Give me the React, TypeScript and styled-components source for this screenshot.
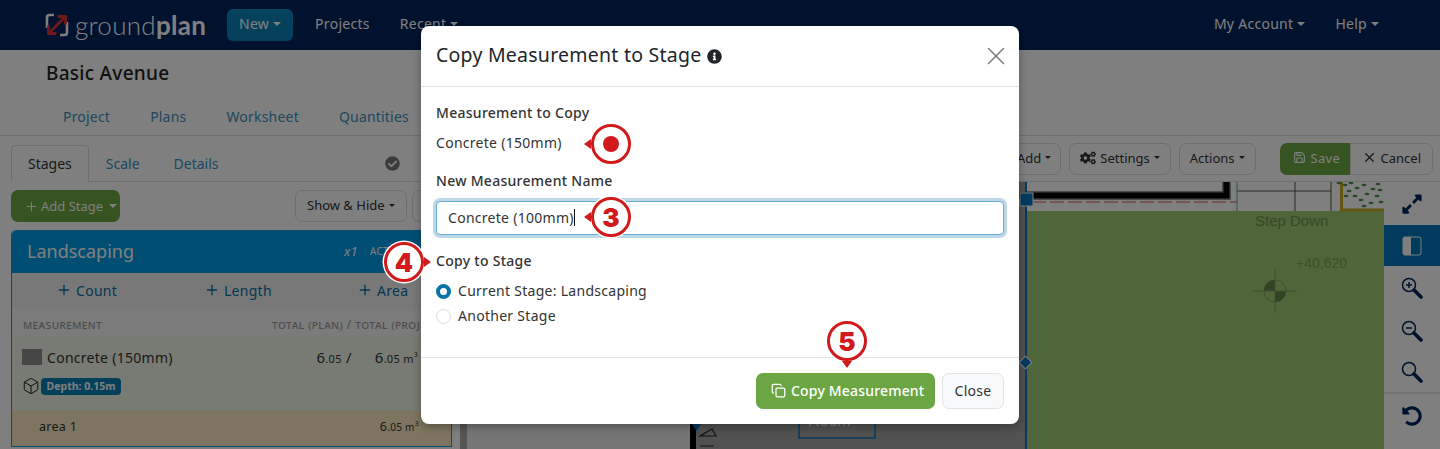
import React from 'react';
import styled, { createGlobalStyle } from 'styled-components';
import { Box, Copy, Plus, Save, X } from 'lucide-react';
import { FaCheckCircle, FaCogs, FaExpandAlt, FaInfoCircle, FaUndoAlt } from 'react-icons/fa';

const Global = createGlobalStyle`
  html, body { margin: 0; padding: 0; background: #fff; }
  body {
    font-family: "Noto Sans", "Open Sans", Arial, sans-serif;
    font-size: 14px;
    letter-spacing: 0.28px;
    color: #333;
    overflow: hidden;
  }
  * { box-sizing: border-box; }
`;

const Page = styled.div`
  position: relative;
  width: 1440px;
  height: 449px;
  overflow: hidden;
  background: #fff;
`;

const Navbar = styled.nav`
  height: 50px;
  background: #02245c;
  display: flex;
  align-items: center;
  padding: 0 44px 0 45px;
  color: #fff;
`;

const Logo = styled.div`
  display: flex;
  align-items: center;
  gap: 6px;
  width: 182px;
`;

const LogoText = styled.span`
  font-family: "Lato", sans-serif;
  font-size: 26px;
  font-weight: 300;
  letter-spacing: 0.3px;
  color: #fff;
  b { font-weight: 700; }
`;

const NavButton = styled.a<{ $active?: boolean }>`
  display: inline-flex;
  align-items: center;
  height: 32px;
  padding: 0 ${(p) => (p.$active ? '12px' : '13px')} 3px;
  border-radius: 6px;
  font-size: 14px;
  color: #fff;
  margin-right: ${(p) => (p.$active ? '9px' : '4px')};
  background: ${(p) => (p.$active ? 'linear-gradient(#0a86bd, #087fb5)' : 'transparent')};
`;

const Caret = styled.i`
  display: inline-block;
  width: 0;
  height: 0;
  margin-left: 4px;
  border-top: 4px solid currentColor;
  border-left: 4px solid transparent;
  border-right: 4px solid transparent;
`;

const NavSpacer = styled.div`
  flex: 1;
`;

const ProjectHeader = styled.header`
  height: 86px;
  padding: 10px 0 0 46px;
  border-bottom: 1px solid #ddd;
`;

const ProjectTitle = styled.h1`
  margin: 0;
  font-size: 19px;
  line-height: 26px;
  font-weight: 500;
  color: #222;
`;

const ProjectTabs = styled.div`
  display: flex;
  gap: 40px;
  margin: 21px 0 0 17px;
`;

const LinkTab = styled.a`
  font-size: 14px;
  letter-spacing: 0.2px;
  color: #3c8fc0;
`;

const Workspace = styled.div`
  display: flex;
  height: 313px;
`;

const LeftPanel = styled.aside`
  width: 452px;
  flex: none;
  padding: 9px 0 0 11px;
`;

const PanelTabs = styled.div`
  display: flex;
  align-items: flex-end;
  height: 37px;
  border-bottom: 1px solid #ddd;
  padding-right: 30px;
`;

const PanelTab = styled.a<{ $active?: boolean }>`
  height: 37px;
  display: flex;
  align-items: center;
  padding: 0 16px;
  font-size: 14px;
  letter-spacing: 0;
  color: ${(p) => (p.$active ? '#333' : '#3c8fc0')};
  border: 1px solid ${(p) => (p.$active ? '#ddd' : 'transparent')};
  border-bottom-color: ${(p) => (p.$active ? '#fff' : 'transparent')};
  border-radius: 4px 4px 0 0;
  margin-bottom: -1px;
`;

const PanelStatus = styled.div`
  margin-left: auto;
  align-self: center;
  padding-right: 22px;
  display: flex;
  color: #777;
`;

const StageBar = styled.div`
  display: flex;
  align-items: center;
  height: 32px;
  margin-top: 8px;
`;

const AddStage = styled.a`
  display: inline-flex;
  align-items: center;
  gap: 2px;
  height: 32px;
  width: 109px;
  padding-left: 13px;
  border-radius: 7px;
  background: #6ca644;
  color: #fff;
  font-size: 13px;
  letter-spacing: 0;
  white-space: nowrap;
`;

const OutlineButton = styled.a<{ $flat?: boolean; $pad?: number }>`
  display: inline-flex;
  align-items: center;
  flex: none;
  height: 32px;
  padding: 0 ${(p) => p.$pad ?? 9}px 2px;
  font-size: 13px;
  letter-spacing: 0;
  color: #333;
  background: #fff;
  border: 1px solid #ddd;
  border-radius: ${(p) => (p.$flat ? '0 7px 7px 0' : '7px')};
  white-space: nowrap;
  svg { margin-right: 4px; }
  i {
    margin-left: 4px;
    border-top-width: 3.5px;
    border-left-width: 3.5px;
    border-right-width: 3.5px;
  }
`;

const StageBarRight = styled.div`
  margin-left: auto;
  display: flex;
  gap: 5px;
  overflow: hidden;
  width: 157px;
`;

const StageCard = styled.section`
  margin-top: 8px;
  border: 1px solid #0a9ce2;
  border-top: none;
  border-radius: 5px 5px 0 0;
`;

const StageHead = styled.div`
  height: 43px;
  background: #009ce6;
  border-radius: 5px 5px 0 0;
  color: #fff;
  display: flex;
  align-items: center;
  padding: 0 0 2px 15px;
`;

const StageName = styled.div`
  font-size: 18px;
  letter-spacing: 0;
  flex: 1;
`;

const StageMeta = styled.em`
  font-size: 13px;
  margin-right: 12px;
`;

const StageActive = styled.span`
  font-size: 10px;
  width: 81px;
  white-space: nowrap;
  overflow: hidden;
`;

const AddRow = styled.div`
  height: 36px;
  background: #f1f1f1;
  display: grid;
  grid-template-columns: 148px 153px 1fr;
  align-items: center;
  padding: 0 0 2px 44px;
`;

const AddLink = styled.a`
  display: inline-flex;
  align-items: center;
  gap: 4px;
  color: #0a6ea6;
  font-size: 14px;
`;

const TableHead = styled.div`
  height: 28px;
  display: flex;
  align-items: center;
  background: #f7f7f7;
  padding: 2px 0 0 11px;
  color: #999;
  font-size: 12.5px;
  letter-spacing: 0.4px;
  font-variant: small-caps;
  text-transform: lowercase;
  white-space: nowrap;
  overflow: hidden;
`;

const TableHeadName = styled.span`
  width: 249px;
  flex: none;
`;

const MeasureRow = styled.div`
  height: 74px;
  background: #eef7e6;
  padding: 10px 0 0 10px;
`;

const MeasureTop = styled.div`
  display: flex;
  align-items: center;
  gap: 5px;
  color: #333;
  font-size: 14px;
`;

const Swatch = styled.i`
  width: 20px;
  height: 16px;
  background: #8c8c8c;
`;

const MeasureTotals = styled.div`
  margin-left: auto;
  display: flex;
  gap: 23px;
  font-size: 15px;
  white-space: nowrap;
  padding-right: 33px;
  small { font-size: 11px; }
  sup { font-size: 7px; }
`;

const MeasureTags = styled.div`
  display: flex;
  align-items: center;
  margin-top: 10px;
  color: #111;
`;

const DepthBadge = styled.span`
  margin-left: 1px;
  height: 17px;
  width: 80px;
  border-radius: 4px;
  background: #0a80b6;
  color: #fff;
  font-size: 10.5px;
  letter-spacing: 0;
  font-weight: 700;
  display: flex;
  align-items: center;
  justify-content: center;
`;

const AreaRow = styled.div`
  height: 35px;
  background: #fcebc1;
  display: flex;
  align-items: center;
  justify-content: space-between;
  padding: 0 32px 5px 27px;
  font-size: 12.5px;
  small { font-size: 10px; }
  sup { font-size: 7px; }
`;

const PlanColumn = styled.div`
  flex: 1;
  display: flex;
  flex-direction: column;
  min-width: 0;
`;

const PlanToolbar = styled.div`
  height: 46px;
  border-bottom: 1px solid #ddd;
  display: flex;
  align-items: center;
  justify-content: flex-end;
  gap: 8px;
  padding: 0 7px 0 0;
`;

const SaveGroup = styled.div`
  display: flex;
  margin-left: 16px;
`;

const SaveButton = styled.a`
  display: inline-flex;
  align-items: center;
  gap: 5px;
  height: 32px;
  width: 70px;
  padding: 0 0 2px 13px;
  font-size: 13px;
  color: #fff;
  background: #6ca644;
  border-radius: 7px 0 0 7px;
`;

const PlanArea = styled.div`
  flex: 1;
  display: flex;
  min-height: 0;
`;

const PlanCanvas = styled.svg`
  flex: 1;
  display: block;
  min-width: 0;
  height: 100%;
`;

const ToolRail = styled.div`
  width: 56px;
  flex: none;
  display: flex;
  flex-direction: column;
  background: #fff;
  color: #02245c;
`;

const ToolButton = styled.a<{ $active?: boolean; $h: number; $divider?: boolean }>`
  height: ${(p) => p.$h}px;
  display: flex;
  align-items: center;
  justify-content: center;
  flex: none;
  background: ${(p) => (p.$active ? '#0074b8' : 'transparent')};
  color: ${(p) => (p.$active ? '#fff' : '#02245c')};
  border-bottom: ${(p) => (p.$divider ? '2px solid #e4e4e4' : 'none')};
`;

const Backdrop = styled.div`
  position: absolute;
  inset: 0;
  background: rgba(0, 0, 0, 0.5);
`;

const Modal = styled.div`
  position: absolute;
  left: 421px;
  top: 26px;
  width: 598px;
  height: 398px;
  background: #fff;
  border-radius: 8px;
  display: flex;
  flex-direction: column;
  box-shadow: 0 3px 10px rgba(0, 0, 0, 0.3);
`;

const ModalHeader = styled.div`
  height: 61px;
  flex: none;
  display: flex;
  align-items: center;
  gap: 6px;
  padding: 0 15px;
  border-bottom: 1px solid #dee2e6;
`;

const ModalTitle = styled.h2`
  margin: 0;
  padding-bottom: 4px;
  font-size: 19.5px;
  letter-spacing: 0.24px;
  font-weight: 400;
  color: #212529;
`;

const CloseIcon = styled.a`
  margin: 0 -7px 0 auto;
  display: flex;
  color: #7b7b7b;
`;

const ModalBody = styled.div`
  flex: 1;
  padding: 16px 15px 0;
`;

const FieldLabel = styled.div`
  font-size: 14px;
  line-height: 20px;
  font-weight: 500;
  color: #333;
`;

const StaticValue = styled.div`
  line-height: 20px;
  margin: 10px 0 18px;
  color: #333;
`;

const InputBox = styled.div`
  display: flex;
  align-items: center;
  height: 34px;
  margin: 10px 0 16px;
  padding: 0 11px 2px;
  color: #333;
  background: #fff;
  border: 1px solid #69aed0;
  border-radius: 4px;
  box-shadow: 0 0 0 3px #bcd9e8;
`;

const Cursor = styled.i`
  display: inline-block;
  width: 1px;
  height: 17px;
  background: #111;
`;

const RadioList = styled.div`
  display: flex;
  flex-direction: column;
  gap: 5px;
  margin-top: 10px;
`;

const RadioRow = styled.label`
  display: flex;
  align-items: center;
  gap: 7px;
  line-height: 20px;
  color: #333;
`;

const RadioDot = styled.i<{ $on?: boolean }>`
  width: 15px;
  height: 15px;
  border-radius: 50%;
  background: #fff;
  border: ${(p) => (p.$on ? '4px solid #0a75a8' : '1px solid #dcdcdc')};
`;

const ModalFooter = styled.div`
  height: 67px;
  flex: none;
  display: flex;
  align-items: flex-start;
  justify-content: flex-end;
  gap: 7px;
  padding: 15px 15px 0 0;
  border-top: 1px solid #dee2e6;
`;

const CopyButton = styled.a`
  display: inline-flex;
  align-items: center;
  gap: 5px;
  height: 36px;
  width: 179px;
  padding: 0 0 1px 15px;
  border-radius: 7px;
  background: #6ca644;
  color: #fff;
  font-weight: 500;
  letter-spacing: 0.18px;
  white-space: nowrap;
`;

const CloseButton = styled.a`
  display: inline-flex;
  align-items: center;
  justify-content: center;
  height: 36px;
  width: 62px;
  padding-bottom: 1px;
  border: 1px solid #e3e3e3;
  border-radius: 7px;
  background: #f8f9fa;
  color: #333;
`;

const Callout = styled.div<{ $x: number; $y: number; $dir: 'left' | 'right' | 'down' }>`
  position: absolute;
  left: ${(p) => p.$x - 20}px;
  top: ${(p) => p.$y - 20}px;
  width: 40px;
  height: 40px;
  border-radius: 50%;
  background: #fff;
  border: 3px solid #d01a1c;
  box-shadow: 0 0 0 1.5px #fff;
  display: flex;
  align-items: center;
  justify-content: center;
  font-family: "Inter", sans-serif;
  font-weight: 900;
  font-size: 26px;
  letter-spacing: 0;
  color: #d01a1c;
  &::after {
    content: '';
    position: absolute;
    width: 0;
    height: 0;
    ${(p) =>
      p.$dir === 'left'
        ? 'left: -10px; top: 12px; border: 5px solid transparent; border-left-width: 0; border-right: 7px solid #d01a1c;'
        : p.$dir === 'right'
          ? 'right: -10px; top: 12px; border: 5px solid transparent; border-right-width: 0; border-left: 7px solid #d01a1c;'
          : 'bottom: -10px; left: 12px; border: 5px solid transparent; border-bottom-width: 0; border-top: 7px solid #d01a1c;'}
  }
`;

const CalloutDot = styled.i`
  width: 16px;
  height: 16px;
  border-radius: 50%;
  background: #d01a1c;
`;

function LogoMark() {
  return (
    <svg width="24" height="24" viewBox="0 0 24 24" fill="none">
      <path d="M9 2H4.500A2.500 2.500 0 0 0 2 4.500V15M15 22h4.500a2.500 2.500 0 0 0 2.500-2.500V9" stroke="#fff" strokeWidth="2.600" />
      <path d="M4 20L20 4M12.500 3.500H20.500V11.500M3.500 12.500V20.500H11.500" stroke="#e03030" strokeWidth="2.800" />
    </svg>
  );
}

function Magnifier({ sign }: { sign?: 'plus' | 'minus' }) {
  return (
    <svg width="22" height="22" viewBox="0 0 22 22" fill="none" stroke="currentColor">
      <circle cx="8" cy="8" r="6.500" strokeWidth="1.500" />
      <path d="M13 13L20 20" strokeWidth="3.600" strokeLinecap="round" />
      {sign && <path d="M5 8h6" strokeWidth="1.500" />}
      {sign === 'plus' && <path d="M8 5v6" strokeWidth="1.500" />}
    </svg>
  );
}

function PanelToggle() {
  return (
    <svg width="20" height="20" viewBox="0 0 20 20" fill="none">
      <rect x="1" y="1" width="18" height="18" rx="2" stroke="#fff" strokeWidth="1" />
      <path d="M1 3a2 2 0 0 1 2-2h6v18H3a2 2 0 0 1-2-2z" fill="#fff" />
    </svg>
  );
}

// floor plan drawing, origin is the top left of the canvas at 452,182
function FloorPlan() {
  const leaves = [
    [887, 1], [893, 3], [899, 1], [905, 6], [912, 3], [897, 9], [903, 14], [909, 18], [915, 12], [921, 7], [926, 2], [925, 14], [919, 21], [912, 24], [929, 20], [928, 8], [894, 14],
  ];
  return (
    <PlanCanvas viewBox="0 0 932 267" preserveAspectRatio="xMinYMin slice">
      <rect width="932" height="267" fill="#fff" />
      <rect x="8" width="7" height="267" fill="#aaaaaa" />
      <rect x="15" width="223" height="267" fill="#ececec" />
      <rect x="238" width="6" height="267" fill="#000" />
      <rect x="244" width="329" height="267" fill="#a3a3a3" />
      <path d="M240 242h9l-4.500 7z" fill="#0a74c0" />
      <path d="M252 254l-4 0l12-7l4 7zM248 264h14" fill="none" stroke="#222" strokeWidth="1.200" />
      <text x="356" y="244" fontFamily="Liberation Sans, Arial, sans-serif" fontSize="16" letterSpacing="0" fill="#fff">Room</text>
      <rect x="347" y="228" width="76" height="28" fill="none" stroke="#0a74c0" strokeWidth="1.500" />
      <rect x="573" y="29" width="359" height="238" fill="#9ccc72" />
      <rect x="573" width="215" height="29" fill="#fff" />
      <path d="M560 13.500H774.500V0" fill="none" stroke="#999" strokeWidth="9" />
      <path d="M560 13.500H774.500V0" fill="none" stroke="#000" strokeWidth="6" />
      <path d="M580 20H785" stroke="#d85555" strokeWidth="1" strokeDasharray="14 4" />
      <path d="M785 9H879M843 0V29M879 0V29" stroke="#555" strokeWidth="1" fill="none" />
      <path d="M785 0V29" stroke="#5aa5a0" strokeWidth="1" />
      <path d="M889.500 0V28H932" fill="none" stroke="#c9ab23" strokeWidth="3" />
      {leaves.map(([x, y]) => (
        <ellipse key={`${x}-${y}`} cx={x} cy={y} rx="2.500" ry="1.300" fill="#4f9650" />
      ))}
      <rect x="573" width="2" height="267" fill="#0a74c0" />
      <rect x="568" y="11" width="13" height="13" fill="#0a74c0" stroke="#fff" strokeWidth="1" />
      <rect x="569" y="176" width="9" height="9" fill="#0a74c0" stroke="#fff" strokeWidth="1" transform="rotate(45 573.500 180.500)" />
      <text x="803" y="44" fontFamily="Liberation Sans, Arial, sans-serif" fontSize="15" letterSpacing="0" fill="#6f9350">Step Down</text>
      <text x="844" y="86" fontFamily="Liberation Sans, Arial, sans-serif" fontSize="14" letterSpacing="0" fill="#7ba25a">+40,620</text>
      <circle cx="823" cy="109" r="11" fill="none" stroke="#7ba25a" />
      <path d="M823 109V98A11 11 0 0 0 812 109zM823 109V120A11 11 0 0 0 834 109z" fill="#65884a" />
      <path d="M801 109H845M823 87V131" stroke="#7ba25a" />
    </PlanCanvas>
  );
}

export default function App() {
  return (
    <Page>
      <Global />
      <Navbar>
        <Logo>
          <LogoMark />
          <LogoText>
            ground<b>plan</b>
          </LogoText>
        </Logo>
        <NavButton $active>
          New
          <Caret />
        </NavButton>
        <NavButton>Projects</NavButton>
        <NavButton>
          Recent
          <Caret />
        </NavButton>
        <NavSpacer />
        <NavButton>
          My Account
          <Caret />
        </NavButton>
        <NavButton>
          Help
          <Caret />
        </NavButton>
      </Navbar>
      <ProjectHeader>
        <ProjectTitle>Basic Avenue</ProjectTitle>
        <ProjectTabs>
          <LinkTab>Project</LinkTab>
          <LinkTab>Plans</LinkTab>
          <LinkTab>Worksheet</LinkTab>
          <LinkTab>Quantities</LinkTab>
        </ProjectTabs>
      </ProjectHeader>
      <Workspace>
        <LeftPanel>
          <PanelTabs>
            <PanelTab $active>Stages</PanelTab>
            <PanelTab>Scale</PanelTab>
            <PanelTab>Details</PanelTab>
            <PanelStatus>
              <FaCheckCircle size={15} />
            </PanelStatus>
          </PanelTabs>
          <StageBar>
            <AddStage>
              <Plus size={15} strokeWidth={1.5} />
              Add Stage
              <Caret />
            </AddStage>
            <StageBarRight>
              <OutlineButton $pad={11}>
                Show &amp; Hide
                <Caret />
              </OutlineButton>
              <OutlineButton />
            </StageBarRight>
          </StageBar>
          <StageCard>
            <StageHead>
              <StageName>Landscaping</StageName>
              <StageMeta>x1</StageMeta>
              <StageActive>ACTIVE</StageActive>
            </StageHead>
            <AddRow>
              <AddLink>
                <Plus size={16} />
                Count
              </AddLink>
              <AddLink>
                <Plus size={16} />
                Length
              </AddLink>
              <AddLink>
                <Plus size={16} />
                Area
              </AddLink>
            </AddRow>
            <TableHead>
              <TableHeadName>Measurement</TableHeadName>
              <span>Total (Plan) / Total (Project)</span>
            </TableHead>
            <MeasureRow>
              <MeasureTop>
                <Swatch />
                Concrete (150mm)
                <MeasureTotals>
                  <span>
                    6<small>.05</small> /
                  </span>
                  <span>
                    6<small>.05 m</small>
                    <sup>3</sup>
                  </span>
                </MeasureTotals>
              </MeasureTop>
              <MeasureTags>
                <Box size={18} strokeWidth={1.25} />
                <DepthBadge>Depth: 0.15m</DepthBadge>
              </MeasureTags>
            </MeasureRow>
            <AreaRow>
              <span>area 1</span>
              <span>
                6<small>.05 m</small>
                <sup>3</sup>
              </span>
            </AreaRow>
          </StageCard>
        </LeftPanel>
        <PlanColumn>
          <PlanToolbar>
            <OutlineButton>
              Add
              <Caret />
            </OutlineButton>
            <OutlineButton $pad={10}>
              <FaCogs size={16} />
              Settings
              <Caret />
            </OutlineButton>
            <OutlineButton $pad={10}>
              Actions
              <Caret />
            </OutlineButton>
            <SaveGroup>
              <SaveButton>
                <Save size={13} />
                Save
              </SaveButton>
              <OutlineButton $flat $pad={11}>
                <X size={15} />
                Cancel
              </OutlineButton>
            </SaveGroup>
          </PlanToolbar>
          <PlanArea>
            <FloorPlan />
            <ToolRail>
              <ToolButton $h={43}>
                <FaExpandAlt size={22} />
              </ToolButton>
              <ToolButton $h={41} $active>
                <PanelToggle />
              </ToolButton>
              <ToolButton $h={44}>
                <Magnifier sign="plus" />
              </ToolButton>
              <ToolButton $h={42}>
                <Magnifier sign="minus" />
              </ToolButton>
              <ToolButton $h={42} $divider>
                <Magnifier />
              </ToolButton>
              <ToolButton $h={44}>
                <FaUndoAlt size={20} />
              </ToolButton>
            </ToolRail>
          </PlanArea>
        </PlanColumn>
      </Workspace>
      <Backdrop />
      <Modal>
        <ModalHeader>
          <ModalTitle>Copy Measurement to Stage</ModalTitle>
          <FaInfoCircle size={15} color="#212529" />
          <CloseIcon>
            <X size={30} strokeWidth={1.2} />
          </CloseIcon>
        </ModalHeader>
        <ModalBody>
          <FieldLabel>Measurement to Copy</FieldLabel>
          <StaticValue>Concrete (150mm)</StaticValue>
          <FieldLabel>New Measurement Name</FieldLabel>
          <InputBox>
            Concrete (100mm)
            <Cursor />
          </InputBox>
          <FieldLabel>Copy to Stage</FieldLabel>
          <RadioList>
            <RadioRow>
              <RadioDot $on />
              Current Stage: Landscaping
            </RadioRow>
            <RadioRow>
              <RadioDot />
              Another Stage
            </RadioRow>
          </RadioList>
        </ModalBody>
        <ModalFooter>
          <CopyButton>
            <Copy size={15} />
            Copy Measurement
          </CopyButton>
          <CloseButton>Close</CloseButton>
        </ModalFooter>
      </Modal>
      <Callout $x={611} $y={144} $dir="left">
        <CalloutDot />
      </Callout>
      <Callout $x={611} $y={217} $dir="left">
        3
      </Callout>
      <Callout $x={404} $y={262} $dir="right">
        4
      </Callout>
      <Callout $x={847} $y={341} $dir="down">
        5
      </Callout>
    </Page>
  );
}
